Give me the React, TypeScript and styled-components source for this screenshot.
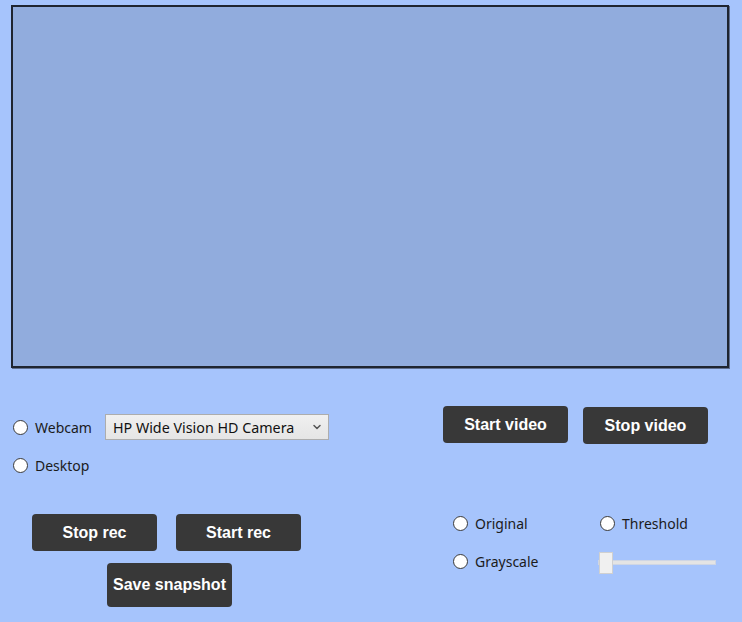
import styled, { createGlobalStyle } from "styled-components";
import { ChevronDown } from "lucide-react";

const GlobalStyle = createGlobalStyle`
  * { box-sizing: border-box; }
  html, body {
    margin: 0;
    padding: 0;
    background: #a6c4fc;
  }
  body {
    font-family: "Noto Sans", "Open Sans", sans-serif;
    color: #1b1b1b;
  }
`;

const App = (): JSX.Element => {
  return (
    <Page>
      <GlobalStyle />
      <Screen />
      <TopRow>
        <SourceGroup>
          <SourceRow>
            <Choice>
              <Radio type="radio" name="source" />
              <span>Webcam</span>
            </Choice>
            <SelectWrap>
              <CameraSelect defaultValue="hp">
                <option value="hp">HP Wide Vision HD Camera</option>
              </CameraSelect>
              <Chevron>
                <ChevronDown size={12} strokeWidth={3} />
              </Chevron>
            </SelectWrap>
          </SourceRow>
          <Choice>
            <Radio type="radio" name="source" />
            <span>Desktop</span>
          </Choice>
        </SourceGroup>
        <ButtonRow $gap={15}>
          <ActionButton>Start video</ActionButton>
          <ActionButton $nudge={1}>Stop video</ActionButton>
        </ButtonRow>
      </TopRow>
      <BottomRow>
        <RecGroup>
          <ButtonRow $gap={19}>
            <ActionButton>Stop rec</ActionButton>
            <ActionButton>Start rec</ActionButton>
          </ButtonRow>
          <SnapshotButton>Save snapshot</SnapshotButton>
        </RecGroup>
        <FilterGroup>
          <Choice>
            <Radio type="radio" name="filter" />
            <span>Original</span>
          </Choice>
          <Choice>
            <Radio type="radio" name="filter" />
            <span>Threshold</span>
          </Choice>
          <Choice>
            <Radio type="radio" name="filter" />
            <span>Grayscale</span>
          </Choice>
          <Slider type="range" min={0} max={255} defaultValue={0} />
        </FilterGroup>
      </BottomRow>
    </Page>
  );
};

const Page = styled.main`
  width: 742px;
  height: 622px;
  padding: 5px 0 0 11px;
  overflow: hidden;
`;

const Screen = styled.div`
  width: 718px;
  height: 363px;
  background: #91acdd;
  border: 2px solid #1f2530;
  box-shadow: 1px 1px 0 #5f6f90;
`;

const TopRow = styled.section`
  display: flex;
  align-items: flex-start;
  margin-top: 38px;
  height: 69px;
`;

const SourceGroup = styled.div`
  width: 432px;
  display: flex;
  flex-direction: column;
  gap: 15px;
  padding: 8px 0 0 2px;
`;

const SourceRow = styled.div`
  display: flex;
  align-items: center;
  gap: 13px;
`;

const Choice = styled.label`
  display: flex;
  align-items: center;
  gap: 7px;
  height: 20px;
  font-size: 14px;
  color: #1b1b1b;
  white-space: nowrap;
`;

const Radio = styled.input`
  appearance: none;
  margin: 0;
  width: 15px;
  height: 15px;
  border-radius: 50%;
  border: 1px solid #3a3a3a;
  background: #ffffff;
`;

const SelectWrap = styled.div`
  position: relative;
  width: 224px;
  height: 26px;
`;

const CameraSelect = styled.select`
  appearance: none;
  width: 100%;
  height: 100%;
  margin: 0;
  padding: 0 24px 0 7px;
  border: 1px solid #adadad;
  border-radius: 0;
  background: linear-gradient(#f0f0f0, #e5e5e5);
  font-family: "Noto Sans", "Open Sans", sans-serif;
  font-size: 14.3px;
  color: #111;
`;

const Chevron = styled.span`
  position: absolute;
  right: 6px;
  top: 7px;
  display: flex;
  color: #555;
  pointer-events: none;
`;

const ButtonRow = styled.div<{ $gap: number }>`
  display: flex;
  align-items: flex-start;
  gap: ${(p) => p.$gap}px;
`;

const ActionButton = styled.button<{ $nudge?: number }>`
  width: 125px;
  height: 37px;
  margin: ${(p) => p.$nudge ?? 0}px 0 0 0;
  border: none;
  border-radius: 4px;
  background: #383838;
  color: #ffffff;
  font-family: "Liberation Sans", Arial, sans-serif;
  font-weight: 700;
  font-size: 16px;
  padding: 0;
`;

const SnapshotButton = styled(ActionButton)`
  height: 44px;
  margin: 12px 0 0 75px;
`;

const BottomRow = styled.section`
  display: flex;
  align-items: flex-start;
  margin-top: 39px;
`;

const RecGroup = styled.div`
  width: 442px;
  display: flex;
  flex-direction: column;
  padding-left: 21px;
`;

const FilterGroup = styled.div`
  display: grid;
  grid-template-columns: 147px 118px;
  row-gap: 17px;
  margin-top: -1px;
  align-items: center;
`;

const Slider = styled.input`
  appearance: none;
  margin: 1px 0 0 -2px;
  width: 118px;
  height: 22px;
  background: transparent;

  &::-webkit-slider-runnable-track {
    height: 5px;
    background: #e4e4e4;
    border: 1px solid #cfd6e4;
  }

  &::-webkit-slider-thumb {
    appearance: none;
    width: 14px;
    height: 22px;
    margin-top: -9px;
    background: #f0f0f0;
    border: 1px solid #d0d0d0;
  }
`;

export default App;
